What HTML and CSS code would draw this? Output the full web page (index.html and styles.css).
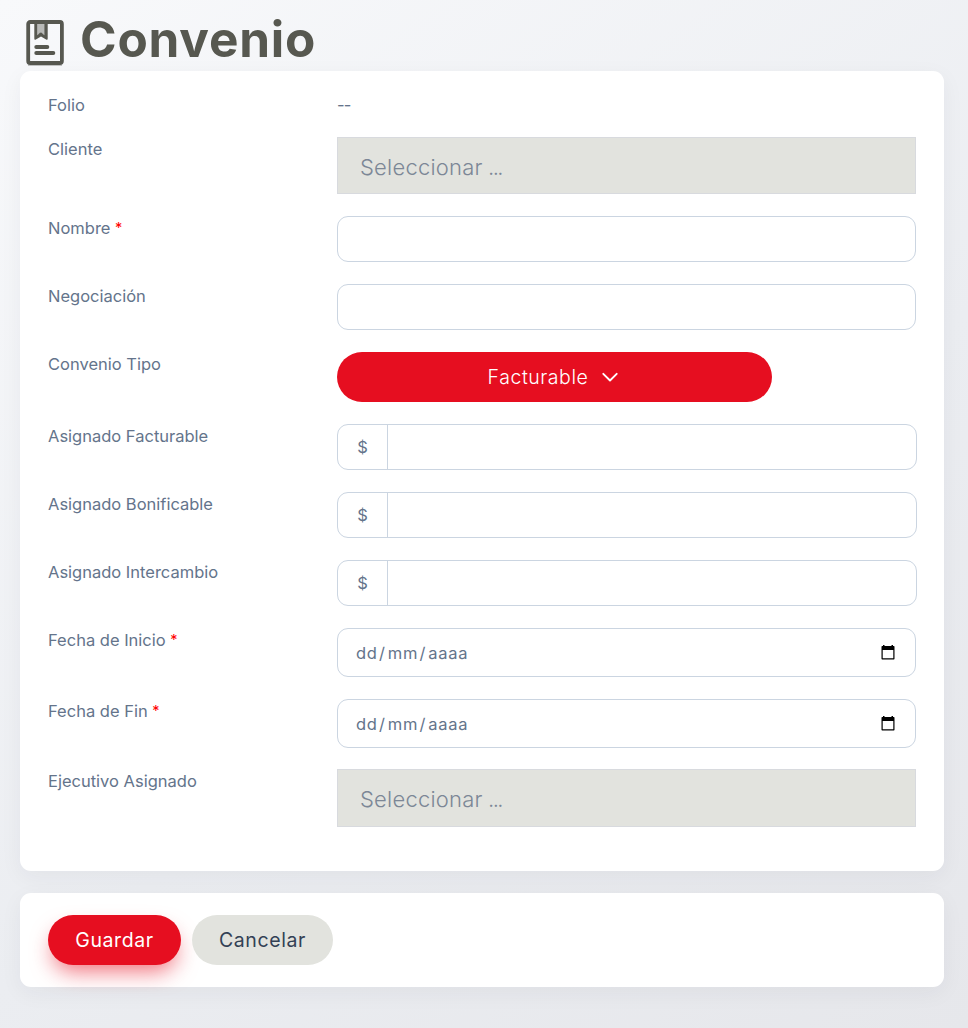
FILE: index.html
```html
<!DOCTYPE html>
<html lang="es">
<head>
<meta charset="utf-8">
<title>Convenio</title>
<link rel="stylesheet" href="styles.css">
</head>
<body>
<main class="page">
  <header class="page-header">
    <svg class="page-icon" viewBox="0 0 38 47" fill="none">
      <path d="M2 46.200h34" stroke="#a9aaa8" stroke-width="1"/>
      <rect x="2.200" y="3" width="33.700" height="41" rx="2" stroke="#575850" stroke-width="3.800"/>
      <path d="M11.300 5h7v11.500l-3.500-3-3.500 3z" fill="#b8b9b7"/>
      <path fill="#575850" d="M8.300 4h3v12.300l2.600-2.500q.9-.7 1.800 0l2.600 2.500V4h3.400v15.400q0 2-1.600 1L15 17.600l-5.100 2.800q-1.600 1-1.600-1z"/>
      <path d="M10.300 28h11M10.300 34h17" stroke="#575850" stroke-width="4" stroke-linecap="round"/>
    </svg>
    <h1 class="page-title">Convenio</h1>
  </header>

  <form class="form">
    <section class="card fields">
      <div class="row row-text"><span class="label">Folio</span><span class="value">--</span></div>
      <div class="row"><span class="label">Cliente</span><div class="picker">Seleccionar <span class="dots">...</span></div></div>
      <div class="row"><label class="label" for="nombre">Nombre <span class="required">*</span></label><input class="control" id="nombre" type="text"></div>
      <div class="row"><label class="label" for="negociacion">Negociación</label><input class="control" id="negociacion" type="text"></div>
      <div class="row"><span class="label">Convenio Tipo</span>
        <button class="dropdown" type="button">Facturable
          <svg class="chevron" viewBox="0 0 16 10" fill="none" stroke="#fff" stroke-width="1.900" stroke-linecap="round" stroke-linejoin="round"><path d="M1.300 1.800 8 8.500l6.700-6.700"/></svg>
        </button>
      </div>
      <div class="row"><label class="label" for="facturable">Asignado Facturable</label><div class="group"><span class="prefix">$</span><input class="group-input" id="facturable" type="text"></div></div>
      <div class="row"><label class="label" for="bonificable">Asignado Bonificable</label><div class="group"><span class="prefix">$</span><input class="group-input" id="bonificable" type="text"></div></div>
      <div class="row"><label class="label" for="intercambio">Asignado Intercambio</label><div class="group"><span class="prefix">$</span><input class="group-input" id="intercambio" type="text"></div></div>
      <div class="row"><span class="label">Fecha de Inicio <span class="required">*</span></span>
        <div class="control date"><span class="date-text">dd<i class="slash">/</i>mm<i class="slash">/</i>aaaa</span>
          <svg class="calendar" viewBox="0 0 14 15"><path fill="#000" fill-rule="evenodd" d="M2 0h1.500v1h7V0H12v1h.8q.7 0 .7.700V13.800q0 .7-.7.700H1.200q-.7 0-.7-.7V1.700Q.5 1 1.200 1H2zM1.700 5v8.200h10.600V5z"/></svg>
        </div>
      </div>
      <div class="row"><span class="label">Fecha de Fin <span class="required">*</span></span>
        <div class="control date"><span class="date-text">dd<i class="slash">/</i>mm<i class="slash">/</i>aaaa</span>
          <svg class="calendar" viewBox="0 0 14 15"><path fill="#000" fill-rule="evenodd" d="M2 0h1.500v1h7V0H12v1h.8q.7 0 .7.700V13.800q0 .7-.7.700H1.200q-.7 0-.7-.7V1.700Q.5 1 1.200 1H2zM1.700 5v8.200h10.600V5z"/></svg>
        </div>
      </div>
      <div class="row row-last"><span class="label">Ejecutivo Asignado</span><div class="picker picker-tall">Seleccionar <span class="dots">...</span></div></div>
    </section>

    <section class="card actions">
      <button class="button button-primary" type="button">Guardar</button>
      <button class="button button-secondary" type="button">Cancelar</button>
    </section>
  </form>
</main>
</body>
</html>
```
FILE: styles.css
```css
* { box-sizing: border-box; }

body {
  margin: 0;
  min-height: 1028px;
  background: linear-gradient(145deg, #f8f9fb 0%, #ebedf1 58%, #e6e7eb 100%);
  color: #64748b;
  font: 400 16.5px/24px Inter, "Liberation Sans", sans-serif;
}

.page { padding: 0 24px 41px 20px; }

.page-header {
  display: flex;
  height: 71px;
  padding: 19px 0 0 6px;
}

.page-icon { width: 38px; height: 47px; }

.page-title {
  margin: -10px 0 0 16px;
  color: #575850;
  font-size: 49.5px;
  font-weight: 650;
  line-height: 60px;
  letter-spacing: 0.8px;
}

.form { display: flex; flex-direction: column; gap: 22px; }

.card {
  background: #fff;
  border-radius: 11px;
  box-shadow: 0 6px 22px rgba(40, 45, 60, 0.05);
}

.fields {
  display: flex;
  flex-direction: column;
  gap: 22px;
  height: 800px;
  padding: 22px 27px 0 28px;
}

.row {
  display: grid;
  grid-template-columns: 289px 580px;
  align-items: start;
}

.row-text { height: 22px; }
.row-last { margin-top: -1px; }
.value { letter-spacing: -0.8px; }
.required { color: #f00; font-size: 14.5px; line-height: 1; vertical-align: 1px; }

.picker {
  width: 579px;
  height: 57px;
  padding: 0 22px;
  border: 1px solid #d8dade;
  background: #e2e3de;
  color: #7c8796;
  font-size: 22px;
  font-weight: 300;
  line-height: 58px;
  letter-spacing: 0.22px;
}

.picker-tall { height: 58px; }
.dots { margin-left: -1px; letter-spacing: -1.6px; }

.control {
  width: 579px;
  height: 46px;
  border: 1px solid #cbd5e1;
  border-radius: 11px;
  background: #fff;
}

.date {
  display: flex;
  align-items: center;
  justify-content: space-between;
  height: 49px;
  padding: 0 20px 1px 18px;
}

.date-text { padding-top: 1px; letter-spacing: 0.7px; }
.slash { margin: 0 2px 0 1.5px; font-style: normal; }
.calendar { width: 14px; height: 15px; }

.dropdown {
  display: flex;
  align-items: center;
  justify-content: center;
  gap: 14px;
  width: 435px;
  height: 50px;
  padding: 0 3px 0 0;
  border: 0;
  border-radius: 25px;
  background: #e60e20;
  color: #fff;
  font: 300 19.5px Inter, sans-serif;
  letter-spacing: 0.55px;
}

.chevron { width: 16px; height: 10px; }

.group {
  display: flex;
  height: 46px;
  border: 1px solid #cbd5e1;
  border-radius: 11px;
  overflow: hidden;
}

.prefix {
  width: 50px;
  border-right: 1px solid #cbd5e1;
  line-height: 44px;
  text-align: center;
}

.group-input { flex: 1; min-width: 0; border: 0; background: transparent; }

.actions {
  display: flex;
  gap: 11px;
  height: 94px;
  padding: 22px 28px;
}

.button {
  height: 50px;
  padding: 0;
  border: 0;
  border-radius: 25px;
  font: 400 19.5px Inter, sans-serif;
  letter-spacing: 0.6px;
}

.button-primary {
  width: 133px;
  background: #e60e20;
  box-shadow: 0 11px 22px -5px rgba(230, 14, 32, 0.6);
  color: #fff;
}

.button-secondary { width: 141px; background: #e2e3de; color: #334155; }
```
